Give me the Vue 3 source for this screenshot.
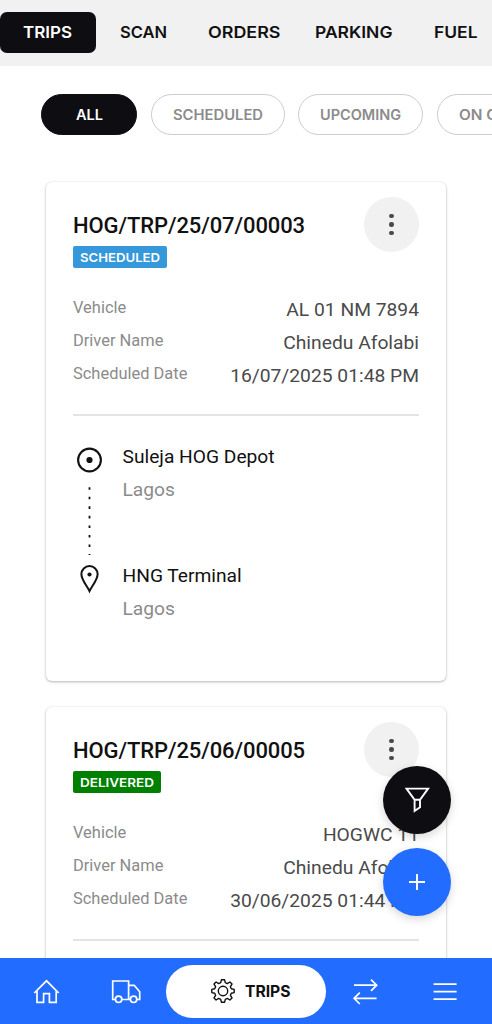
<script setup>
import { h } from 'vue'

const tabs = [
  { label: 'TRIPS', w: 49, active: true },
  { label: 'SCAN', w: 47 },
  { label: 'ORDERS', w: 72.5, tight: true },
  { label: 'PARKING', w: 77.5 },
  { label: 'FUEL', w: 43.5 },
]
const chips = [
  { label: 'ALL', w: 27, active: true },
  { label: 'SCHEDULED', w: 90 },
  { label: 'UPCOMING', w: 81 },
  { label: 'ON GOING', w: 78 },
]
const trips = [
  {
    id: 'HOG/TRP/25/07/00003', status: 'SCHEDULED', kind: 'scheduled', w: 80,
    rows: [['Vehicle', 'AL 01 NM 7894'], ['Driver Name', 'Chinedu Afolabi'], ['Scheduled Date', '16/07/2025 01:48 PM']],
  },
  {
    id: 'HOG/TRP/25/06/00005', status: 'DELIVERED', kind: 'delivered', w: 74,
    rows: [['Vehicle', 'HOGWC 11'], ['Driver Name', 'Chinedu Afolabi'], ['Scheduled Date', '30/06/2025 01:44 PM']],
  },
]

// Label set to a fixed width, for the wide geometric caps
const Wide = (p) =>
  h('svg', { width: p.w, height: 20, viewBox: `0 0 ${p.w} 20`, overflow: 'visible' }, [
    h('text', {
      x: 0, y: 16, textLength: p.w, lengthAdjust: 'spacingAndGlyphs', fill: 'currentColor',
      'font-size': p.size, 'font-weight': p.weight || 500, 'font-family': 'Inter, sans-serif',
    }, p.text),
  ])
Wide.props = ['text', 'w', 'size', 'weight']
</script>

<template>
  <div class="app">
    <nav class="tabs">
      <div v-for="t in tabs" :key="t.label" class="tab" :class="{ active: t.active, tight: t.tight }">
        <Wide :text="t.label" :w="t.w" size="16.5" weight="570" />
      </div>
    </nav>
    <div class="chips">
      <div v-for="c in chips" :key="c.label" class="chip" :class="{ active: c.active }">
        <Wide :text="c.label" :w="c.w" size="13.8" weight="570" />
      </div>
    </div>
    <main class="list">
      <article v-for="t in trips" :key="t.id" class="card">
        <header class="head">
          <div>
            <h2 class="title">{{ t.id }}</h2>
            <span class="badge" :class="t.kind"><Wide :text="t.status" :w="t.w" size="12.4" weight="570" /></span>
          </div>
          <button class="more"><i></i><i></i><i></i></button>
        </header>
        <dl class="rows">
          <div v-for="r in t.rows" :key="r[0]" class="row"><dt>{{ r[0] }}</dt><dd>{{ r[1] }}</dd></div>
        </dl>
        <div class="route">
          <svg class="track" width="34" height="160" viewBox="0 0 34 160" fill="none" stroke="#111">
            <circle cx="16.5" cy="20" r="11.4" stroke-width="2.1" />
            <circle cx="16.5" cy="20" r="3.1" fill="#111" stroke="none" />
            <path d="M16.5 47.2V115" stroke-width="1.8" stroke-dasharray="2.6 6.95" />
            <path d="M16.500 151C14.500 146.500 8.400 140 8.400 134.200a8.100 8.100 0 0 1 16.200 0C24.600 140 18.500 146.500 16.500 151Z" stroke-width="2" />
            <circle cx="16.5" cy="134.500" r="2.100" fill="#111" stroke="none" />
          </svg>
          <div class="stops">
            <div class="stop"><p>Suleja HOG Depot</p><p class="city">Lagos</p></div>
            <div class="stop"><p>HNG Terminal</p><p class="city">Lagos</p></div>
          </div>
        </div>
      </article>
    </main>

    <div class="fabs">
      <button class="fab dark">
        <svg width="68" height="68" viewBox="0 0 68 68" fill="none" stroke="#fff" stroke-width="1.900">
          <path d="M23.500 22.600H45.100L37 33.700H31.600ZM31.600 33.700V45L37 41.200V33.700" />
        </svg>
      </button>
      <button class="fab blue">
        <svg width="68" height="68" viewBox="0 0 68 68" stroke="#fff" stroke-width="1.900"><path d="M34 26V42M26 34H42" /></svg>
      </button>
    </div>

    <nav class="bottom">
      <svg class="item" width="80" height="66" viewBox="0 0 80 66" fill="none" stroke="#fff" stroke-width="1.700">
        <path d="M34.300 35L46.500 22.800L58.700 35M37 32.500V44.400H43.600V35.600H49.400V44.400H56.200V32.500" />
      </svg>
      <svg class="item" width="80" height="66" viewBox="0 0 80 66" fill="none" stroke="#fff" stroke-width="1.700">
        <path d="M35.200 41.500H32.700V23H48.600V41.500H42M48.600 27.300H54.200L59.700 33.700V41.500H57M48.600 41.500H50.500" />
        <circle cx="38.600" cy="41.300" r="3.200" /><circle cx="53.600" cy="41.300" r="3.200" />
      </svg>
      <div class="current">
        <svg width="26" height="26" viewBox="-13 -13 26 26" fill="none" stroke="#111" stroke-width="1.400" stroke-linejoin="round">
          <path d="M-1.600-11.200H1.600L2.300-8.300L4.300-7.400L6.900-9L9-6.900L7.400-4.300L8.300-2.300L11.200-1.600V1.600L8.300 2.300L7.400 4.300L9 6.900L6.900 9L4.300 7.400L2.300 8.300L1.600 11.200H-1.600L-2.300 8.300L-4.300 7.400L-6.900 9L-9 6.900L-7.400 4.300L-8.300 2.300L-11.200 1.600V-1.600L-8.300-2.300L-7.400-4.300L-9-6.900L-6.900-9L-4.300-7.400L-2.300-8.300Z" />
          <circle r="4.700" />
        </svg>
        <Wide text="TRIPS" w="45.5" size="15.4" weight="700" />
      </div>
      <svg class="item" width="80" height="66" viewBox="0 0 80 66" fill="none" stroke="#fff" stroke-width="1.700">
        <path d="M28 27.200H50.500M45 21.600L50.700 27.200L45 32.900M50.600 40.300H28.200M33.800 34.700L28.100 40.300L33.800 46" />
      </svg>
      <svg class="item" width="80" height="66" viewBox="0 0 80 66" stroke="#fff" stroke-width="1.700">
        <path d="M27.600 26.200H50.600M27.600 33.700H50.600M27.600 41.200H50.600" />
      </svg>
    </nav>
  </div>
</template>

<style>
html, body { margin: 0; overflow: hidden; background: #fff; }
</style>
<style scoped>
.app { position: relative; width: 492px; height: 1024px; overflow: hidden; background: #fff; font-family: Roboto, sans-serif; color: #111; display: flex; flex-direction: column; }
.app svg { display: block; flex: none; }
button { border: 0; padding: 0; }
.tabs { flex: none; height: 66px; background: #f1f1f1; display: flex; align-items: flex-start; padding-top: 12px; box-sizing: border-box; }
.tab { flex: none; height: 41px; padding: 9.600px 17.700px 0 23.700px; box-sizing: border-box; border-radius: 7px; }
.tab.tight { padding-right: 10.500px; }
.tab.active { background: #0d0d12; color: #fff; padding-right: 23.700px; padding-left: 23.300px; }
.chips { flex: none; display: flex; gap: 13.500px; padding: 28px 0 0 41px; height: 69px; }
.chip { flex: none; height: 41px; box-sizing: border-box; border: 1.500px solid #ccc; border-radius: 21px; padding: 9.400px 21px 0; color: #8b8b8b; }
.chip.active { background: #0d0d12; border-color: #0d0d12; color: #fff; padding: 9.400px 33.500px 0; }
.list { flex: none; padding: 19px 46px 0; display: flex; flex-direction: column; gap: 26px; }
.card { height: 499px; box-sizing: border-box; padding: 0 27px; border-radius: 6px; background: #fff; box-shadow: 0 1px 3px rgba(0,0,0,.28), 0 0 1px rgba(0,0,0,.12); }
.head { display: flex; justify-content: space-between; height: 110.500px; }
.title { margin: 29px 0 5px; font-size: 22px; line-height: 30px; font-weight: 500; letter-spacing: -.1px; }
.badge { display: inline-block; height: 22px; padding: 0 7px; border-radius: 2px; color: #fff; vertical-align: top; }
.scheduled { background: #3498db; }
.delivered { background: #008000; }
.more { margin-top: 15px; width: 55px; height: 55px; border-radius: 50%; background: #f1f1f1; display: flex; flex-direction: column; align-items: center; justify-content: center; gap: 4px; }
.more i { width: 4.400px; height: 4.400px; border-radius: 50%; background: #4a4a4a; }
.rows { margin: 0; padding-bottom: 22.500px; border-bottom: 2px solid #e3e3e3; }
.row { display: flex; justify-content: space-between; height: 33px; }
dt { font-size: 16.450px; line-height: 30px; color: #8b8b8b; }
dd { margin: 0; font-size: 19.250px; line-height: 34px; color: #4a4a4a; }
.route { display: flex; padding-top: 24px; }
.stops { display: flex; flex-direction: column; gap: 53px; padding: 0 0 0 15.500px; }
.stop p { margin: 0; font-size: 19.200px; line-height: 33px; }
.stop .city { color: #8b8b8b; }
.fabs { position: absolute; left: 382.700px; top: 766.300px; display: flex; flex-direction: column; gap: 14px; }
.fab { width: 68px; height: 68px; border-radius: 50%; box-shadow: 0 3px 10px rgba(0,0,0,.16); }
.dark { background: #0d0d12; }
.blue { background: #226dff; }
.bottom { position: absolute; left: 0; right: 0; bottom: 0; height: 66.500px; background: #226dff; display: flex; align-items: center; }
.current { flex: none; width: 160px; height: 52.500px; margin: 1px 0 0 6px; border-radius: 27px; background: #fff; display: flex; align-items: center; gap: 9px; padding-left: 44px; box-sizing: border-box; }
</style>
